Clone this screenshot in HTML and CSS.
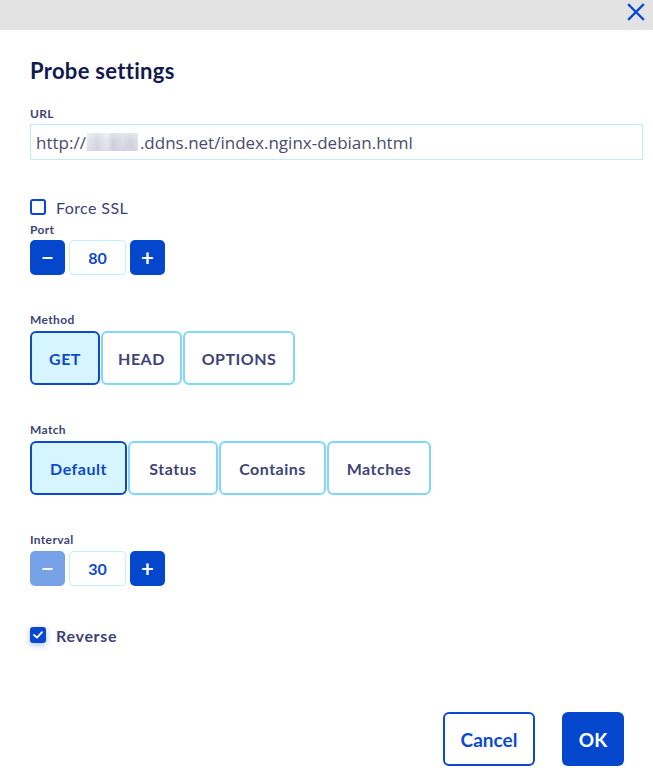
FILE: index.html
```html
<!DOCTYPE html>
<html lang="en">
<head>
<meta charset="utf-8">
<title>Probe settings</title>
<link rel="stylesheet" href="styles.css">
</head>
<body>
<div class="topbar">
  <button class="close" aria-label="Close">
    <svg width="18" height="18" viewBox="0 0 18 18"><path d="M2 2 L16 16 M16 2 L2 16" stroke="#0b49d0" stroke-width="2.4" stroke-linecap="square" fill="none"/></svg>
  </button>
</div>
<div class="content">
  <h1 class="title">Probe settings</h1>

  <div class="label label-url">URL</div>
  <div class="text-input">http://<span class="redacted"></span>.ddns.net/index.nginx-debian.html</div>

  <label class="check-row check-ssl">
    <span class="box"></span>
    <span class="check-text">Force SSL</span>
  </label>

  <div class="label label-port">Port</div>
  <div class="stepper">
    <button class="step-btn">&#8722;</button>
    <div class="step-value">80</div>
    <button class="step-btn">+</button>
  </div>

  <div class="label label-gap">Method</div>
  <div class="segments">
    <button class="seg seg-on w-get">GET</button>
    <button class="seg w-head">HEAD</button>
    <button class="seg w-options">OPTIONS</button>
  </div>

  <div class="label label-gap">Match</div>
  <div class="segments">
    <button class="seg seg-on w-default">Default</button>
    <button class="seg w-status">Status</button>
    <button class="seg w-contains">Contains</button>
    <button class="seg w-matches">Matches</button>
  </div>

  <div class="label label-gap">Interval</div>
  <div class="stepper">
    <button class="step-btn step-disabled">&#8722;</button>
    <div class="step-value">30</div>
    <button class="step-btn">+</button>
  </div>

  <label class="check-row check-reverse">
    <span class="box box-on">
      <svg width="10" height="8" viewBox="0 0 10 8"><path d="M1 4 L4 6.6 L9 1.2" stroke="#fff" stroke-width="1.8" fill="none" stroke-linecap="round" stroke-linejoin="round"/></svg>
    </span>
    <span class="check-text check-bold">Reverse</span>
  </label>

  <div class="actions">
    <button class="btn btn-outline">Cancel</button>
    <button class="btn btn-primary">OK</button>
  </div>
</div>
</body>
</html>
```
FILE: styles.css
```css
* { box-sizing: border-box; }
html, body { margin: 0; padding: 0; background: #fff; }
body {
  font-family: "Lato", "Noto Sans", sans-serif;
  color: #3d4275;
  width: 653px;
  height: 776px;
  overflow: hidden;
}
button { font-family: inherit; cursor: pointer; }

.topbar {
  height: 30px;
  background: #e3e3e3;
  display: flex;
  justify-content: flex-end;
  align-items: flex-start;
}
.close {
  border: 0;
  background: transparent;
  padding: 0;
  width: 18px;
  height: 18px;
  margin: 3px 8px 0 0;
  display: flex;
}

.content {
  padding: 0 10px 0 30px;
  display: flex;
  flex-direction: column;
  align-items: flex-start;
}

.title {
  margin: 27px 0 0 0;
  font-size: 22px;
  line-height: 28px;
  font-weight: 700;
  letter-spacing: 0.3px;
  color: #121a50;
}

.label {
  font-size: 12px;
  line-height: 16px;
  font-weight: 700;
  letter-spacing: 0.35px;
  color: #3f4477;
}
.label-url { margin-top: 21px; }
.label-port { margin-top: 5px; }
.label-gap { margin-top: 37px; margin-bottom: 1px; }

.text-input {
  margin-top: 2px;
  width: 613px;
  height: 36px;
  border: 1px solid #bfeaf7;
  padding: 0 5px;
  display: flex;
  align-items: center;
  font-family: "Open Sans", "Lato", sans-serif;
  font-size: 17px;
  color: #4a4c6c;
}
.redacted {
  display: inline-block;
  width: 51px;
  height: 18px;
  margin: 0 2px 0 1px;
  background:
    linear-gradient(180deg, rgba(255,255,255,0.35) 0%, rgba(255,255,255,0) 45%, rgba(200,200,214,0.25) 100%),
    linear-gradient(90deg, #e6e6ee 0%, #d6d6e2 20%, #e8e8ef 38%, #d0d0dc 52%, #dcdce6 70%, #d2d2de 86%, #e0e0e8 100%);
}

.check-row {
  display: flex;
  align-items: center;
  gap: 10px;
  height: 20px;
}
.check-ssl { margin-top: 37px; }
.check-reverse { margin-top: 39px; }
.box {
  width: 16px;
  height: 16px;
  border: 2px solid #0a47cf;
  border-radius: 3px;
  display: flex;
  align-items: center;
  justify-content: center;
  background: #fff;
}
.box-on {
  background: #0a47cf;
  box-shadow: 0 2px 6px rgba(10, 71, 207, 0.35);
}
.check-text {
  font-size: 16px;
  letter-spacing: 0.4px;
  color: #3d4275;
}
.check-bold { font-weight: 700; letter-spacing: 0.7px; }

.stepper {
  margin-top: 2px;
  display: flex;
  gap: 4px;
}
.step-btn {
  width: 35px;
  height: 35px;
  border: 0;
  border-radius: 5px;
  background: #0447cc;
  color: #fff;
  font-size: 22px;
  font-weight: 700;
  padding: 0;
  display: flex;
  align-items: center;
  justify-content: center;
  line-height: 1;
}
.step-disabled { background: #78a2e8; }
.step-value {
  width: 57px;
  height: 35px;
  border: 1px solid #c3effc;
  border-radius: 4px;
  display: flex;
  align-items: center;
  justify-content: center;
  font-size: 16px;
  font-weight: 700;
  color: #0d49cc;
}

.segments {
  margin-top: 2px;
  display: flex;
  gap: 1px;
}
.seg {
  height: 54px;
  border: 2px solid #7fd7fc;
  border-radius: 6px;
  background: #fff;
  color: #3f4477;
  font-size: 16px;
  font-weight: 700;
  padding: 0;
  letter-spacing: 0.5px;
}
.seg-on {
  background: #d7f5fe;
  border-color: #0d49cc;
  color: #0d49cc;
}
.w-get { width: 70px; }
.w-head { width: 81px; }
.w-options { width: 112px; }
.w-default { width: 97px; }
.w-status { width: 90px; }
.w-contains { width: 107px; }
.w-matches { width: 104px; }

.actions {
  align-self: stretch;
  margin-top: 67px;
  display: flex;
  justify-content: flex-end;
  gap: 27px;
  padding-right: 19px;
}
.btn {
  height: 54px;
  border-radius: 6px;
  font-size: 19px;
  font-weight: 700;
  padding: 0;
}
.btn-outline {
  background: #fff;
  border: 2px solid #0d49cc;
  color: #0d49cc;
  width: 92px;
}
.btn-primary {
  background: #0447cc;
  border: 0;
  color: #fff;
  width: 62px;
}
```
